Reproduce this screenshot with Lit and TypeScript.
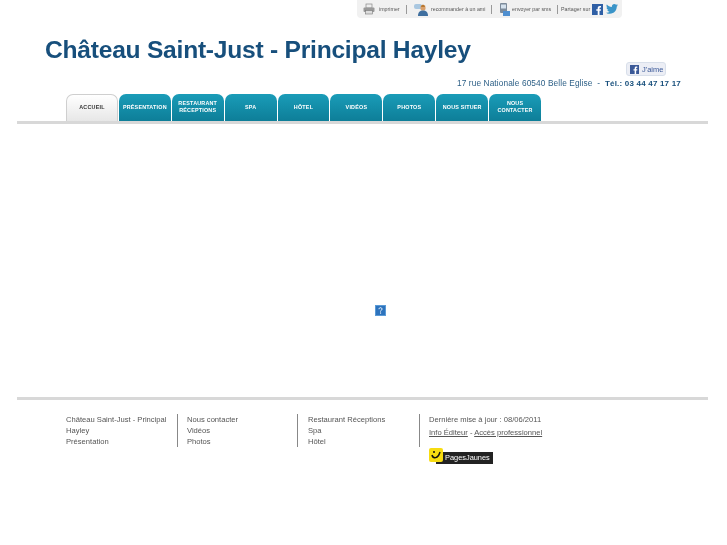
import { LitElement, html, css } from "lit";
import { customElement } from "lit/decorators.js";

const TABS = [
  ["ACCUEIL"], ["PRÉSENTATION"], ["RESTAURANT", "RÉCEPTIONS"], ["SPA"], ["HÔTEL"],
  ["VIDÉOS"], ["PHOTOS"], ["NOUS SITUER"], ["NOUS", "CONTACTER"],
];

@customElement("app-root")
export class AppRoot extends LitElement {
  static styles = css`
    :host { display: block; width: 727px; height: 545px; overflow: hidden; background: #fff; font-family: "Liberation Sans", Arial, sans-serif; filter: blur(0.3px); }
    .topwrap { display: flex; justify-content: flex-end; padding-right: 105px; }
    .topbar { width: 265px; height: 18px; box-sizing: border-box; background: #f1f1f1; border-radius: 0 0 4px 4px; display: flex; align-items: center; padding-left: 6px; font-size: 5.3px; color: #555; }
    .topbar svg { display: block; flex: none; }
    .t1 { margin-left: 4px; width: 27px; }
    .t2 { margin-left: 3px; width: 60px; }
    .t3 { margin-left: 2px; width: 44px; }
    .t4 { margin-left: 3px; width: 31px; }
    .sep { width: 1px; height: 9px; background: #999; flex: none; }
    .s1 { margin-right: 7px; }
    .s2 { margin-right: 8px; }
    .s3 { margin-left: 1px; }
    .tw { margin-left: 3px; }
    header { padding: 17px 0 4px 45px; height: 76px; box-sizing: border-box; }
    .titlerow { display: flex; justify-content: space-between; height: 41px; padding-right: 61px; }
    h1 { margin: 0; font-size: 24.6px; letter-spacing: -0.24px; line-height: 30px; font-weight: bold; color: #174f7c; }
    .like { align-self: flex-end; width: 40px; height: 14px; box-sizing: border-box; border: 1px solid #d8dfea; background: #eceef5; border-radius: 3px; display: flex; align-items: center; padding-left: 3px; gap: 3px; font-size: 7.5px; color: #3b5998; }
    .addr { text-align: right; padding-right: 46px; font-size: 8.3px; line-height: 14px; color: #2c5f86; letter-spacing: 0.1px; white-space: pre; }
    .addr b { color: #174f7c; letter-spacing: 0.2px; font-size: 8px; }
    nav { display: flex; gap: 1px; padding-left: 66px; height: 28px; }
    .tab { width: 51.9px; height: 28px; box-sizing: border-box; border-radius: 7px 7px 0 0; background: linear-gradient(#1a9cb8, #0d7d97); color: #fff; font-size: 5.4px; font-weight: bold; line-height: 7px; letter-spacing: 0.2px; text-align: center; display: flex; flex-direction: column; justify-content: center; padding-bottom: 2px; }
    .tab.on { background: linear-gradient(#fff, #e6e6e6); color: #333; border: 1px solid #cfcfcf; border-bottom: 0; }
    .rule { margin: -1px 19px 0 17px; height: 3px; background: #d8d8d8; position: relative; }
    main { height: 274px; box-sizing: border-box; padding: 181px 0 0 375px; }
    .broken { display: block; }
    footer { display: flex; padding: 14px 0 0 66px; font-size: 7.6px; line-height: 11px; color: #555; }
    .col { box-sizing: border-box; height: 33px; }
    .c1 { width: 111px; padding-right: 8px; }
    .c2, .c3, .c4 { border-left: 1px solid #888; padding-left: 9px; }
    .c2 { width: 120px; }
    .c3 { width: 122px; padding-left: 10px; }
    .c4 { width: 160px; height: 33px; overflow: visible; }
    .c4 p { margin: 0 0 2px; line-height: 11px; }
    .pj { display: flex; margin-top: 10px; height: 16px; }
    .smile { width: 14px; height: 14px; background: #f7dc11; border-radius: 2px; position: relative; z-index: 1; display: block; }
    .pjt { margin: 4px 0 0 -7px; width: 57px; height: 12px; box-sizing: border-box; padding-left: 9px; background: #222; color: #fff; font-size: 7.4px; line-height: 12px; }
  `;

  render() {
    return html`
      <div class="topwrap"><div class="topbar">
        <svg width="12" height="12" viewBox="0 0 12 12"><rect x="3" y="1" width="6" height="4" fill="#eee" stroke="#888" stroke-width=".7"/><rect x=".5" y="4.5" width="11" height="4.5" rx="1" fill="#999"/><rect x="2.5" y="7.5" width="7" height="3.5" fill="#ddd" stroke="#777" stroke-width=".6"/></svg>
        <span class="t1">imprimer</span><i class="sep s1"></i>
        <svg width="14" height="13" viewBox="0 0 14 13"><rect x="0" y="1" width="8" height="5" rx="2" fill="#a9c7e0"/><circle cx="9" cy="5" r="2.6" fill="#d9a06b"/><path d="M4 13c0-4 2-5.500 5-5.500s5 1.500 5 5.500z" fill="#3f6f9f"/><path d="M6.500 3l2.500-1.500 2.500 1.500-1 1h-3z" fill="#b9772f"/></svg>
        <span class="t2">recommander à un ami</span><i class="sep s2"></i>
        <svg width="10" height="13" viewBox="0 0 10 13"><rect x="0" y="0" width="7" height="10" rx="1" fill="#7d8b9a"/><rect x="1" y="1.500" width="5" height="4" fill="#d5e2ee"/><rect x="3" y="8" width="7" height="5" fill="#4f8fd0"/></svg>
        <span class="t3">envoyer par sms</span><i class="sep s3"></i>
        <span class="t4">Partager sur</span>
        <svg width="11" height="11" viewBox="0 0 11 11"><rect width="11" height="11" fill="#2f5fa5"/><path d="M7.500 11V6.800h1.300l.2-1.600H7.500v-1c0-.5.200-.8.800-.8H9V2c-.3 0-.7-.1-1.200-.1-1.300 0-2.100.8-2.100 2.200v1.100H4.300v1.600h1.400V11z" fill="#fff"/></svg>
        <svg class="tw" width="12" height="10" viewBox="0 0 24 20"><path d="M24 2.400c-.9.400-1.800.7-2.800.8 1-.6 1.800-1.600 2.200-2.700-1 .6-2 1-3.100 1.200C19.300.7 18 0 16.600 0c-2.700 0-4.900 2.200-4.900 4.900 0 .4 0 .8.100 1.100C7.700 5.800 4.100 3.900 1.700.9 1.200 1.600 1 2.500 1 3.400c0 1.700.9 3.200 2.200 4.100-.8 0-1.600-.2-2.200-.6v.1c0 2.400 1.700 4.400 3.900 4.800-.7.200-1.500.2-2.200.1.600 2 2.400 3.400 4.600 3.400-1.700 1.300-3.800 2.100-6.100 2.100-.4 0-.8 0-1.200-.1C2.200 18.900 4.800 19.700 7.500 19.700c9.100 0 14-7.500 14-14v-.6c1-.7 1.800-1.600 2.500-2.700z" fill="#3a94c8"/></svg>
      </div></div>
      <header>
        <div class="titlerow">
          <h1>Château Saint-Just - Principal Hayley</h1>
          <div class="like"><svg width="9" height="9" viewBox="0 0 11 11"><rect width="11" height="11" fill="#3b5998"/><path d="M7.500 11V6.800h1.300l.2-1.600H7.500v-1c0-.5.200-.8.800-.8H9V2c-.3 0-.7-.1-1.200-.1-1.300 0-2.100.8-2.100 2.200v1.100H4.300v1.600h1.400V11z" fill="#fff"/></svg>J'aime</div>
        </div>
        <div class="addr">17 rue Nationale 60540 Belle Eglise  -  <b>Tél.: 03 44 47 17 17</b></div>
      </header>
      <nav>
        ${TABS.map((t, i) => html`<div class="tab ${i === 0 ? "on" : ""}">${t.map((l) => html`<span>${l}</span>`)}</div>`)}
      </nav>
      <div class="rule"></div>
      <main>
        <svg class="broken" width="11" height="11" viewBox="0 0 11 11"><rect width="11" height="11" fill="#5a9ad6"/><rect x="1" y="1" width="9" height="9" fill="#2d73bd"/><path d="M4 4.200c0-2 3-2 3 0 0 1-1.500 1-1.500 2.300" fill="none" stroke="#fff" stroke-width="1"/><rect x="5" y="7.500" width="1.100" height="1.100" fill="#fff"/></svg>
      </main>
      <div class="rule"></div>
      <footer>
        <div class="col c1">Château Saint-Just - Principal Hayley<br>Présentation</div>
        <div class="col c2">Nous contacter<br>Vidéos<br>Photos</div>
        <div class="col c3">Restaurant Réceptions<br>Spa<br>Hôtel</div>
        <div class="col c4">
          <p>Dernière mise à jour : 08/06/2011</p>
          <p><u>Info Éditeur</u> - <u>Accès professionnel</u></p>
          <div class="pj">
            <svg class="smile" viewBox="0 0 14 14"><path d="M3 7c1 4 6 4 8 -3" fill="none" stroke="#111" stroke-width="1.500"/><circle cx="5" cy="4" r="1" fill="#111"/></svg>
            <span class="pjt">PagesJaunes</span>
          </div>
        </div>
      </footer>
    `;
  }
}
